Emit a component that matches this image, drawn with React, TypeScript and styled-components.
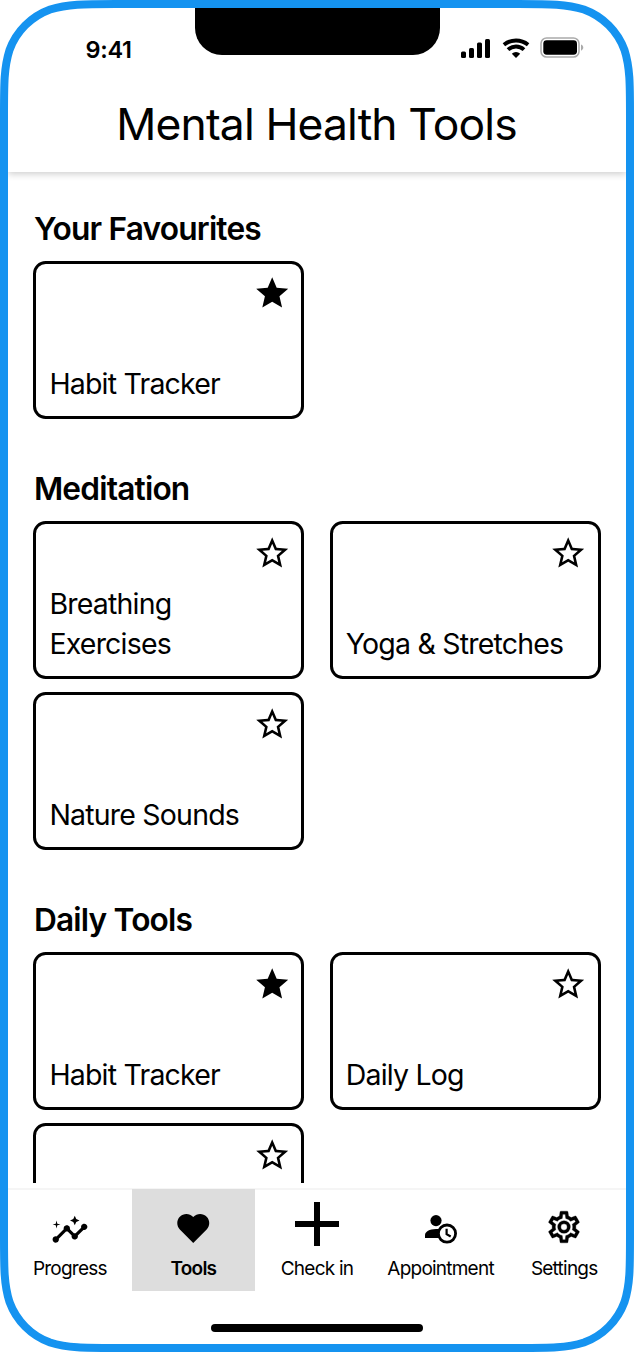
import React from "react";
import styled, { createGlobalStyle, css } from "styled-components";
import { MdInsights, MdStar, MdStarBorder } from "react-icons/md";

const GlobalStyle = createGlobalStyle`
  *, *::before, *::after { box-sizing: border-box; }
  body { margin: 0; background: #fff; color: #000; font-family: Inter, "Liberation Sans", sans-serif; }
`;

const Phone = styled.div`
  position: relative;
  display: flex;
  flex-direction: column;
  width: 634px;
  height: 1352px;
  padding: 8px;
  background: #fff;
  overflow: hidden;
`;

const Bezel = styled.svg`
  position: absolute;
  inset: 0;
  pointer-events: none;
`;

const Header = styled.header`
  flex: none;
  height: 164px;
  box-shadow: 0 2px 7px rgba(0, 0, 0, 0.2);
  clip-path: inset(0 0 -16px 0);
`;

const StatusBar = styled.div`
  display: grid;
  grid-template-columns: 186.5px 245px 1fr;
  height: 76px;
`;

const Time = styled.span`
  padding: 27px 0 0 77.5px;
  font-size: 23.5px;
  line-height: 30px;
  font-weight: 600;
  letter-spacing: -0.3px;
`;

const Notch = styled.div`
  height: 47px;
  background: #000;
  border-radius: 0 0 27px 27px;
`;

const Indicators = styled.div`
  display: flex;
  align-items: flex-start;
  padding: 29px 0 0 21px;
`;

const Title = styled.h1`
  margin: 0;
  padding: 13px 1px 0 0;
  font-size: 44.4px;
  line-height: 54px;
  font-weight: 400;
  letter-spacing: -0.85px;
  text-align: center;
`;

const Content = styled.main`
  flex: none;
  display: flex;
  flex-direction: column;
  gap: 50.7px;
  height: 1011px;
  padding: 38px 25.4px 0;
  overflow: hidden;
`;

const SectionTitle = styled.h2`
  margin: 0 0 13px 0.5px;
  font-size: 31.7px;
  line-height: 38px;
  font-weight: 600;
  letter-spacing: -0.82px;
`;

const CardGrid = styled.div`
  display: grid;
  grid-template-columns: 1fr 1fr;
  gap: 12.7px 25.4px;
`;

const Card = styled.article`
  display: flex;
  flex-direction: column;
  justify-content: space-between;
  height: 158.35px;
  padding: 9.8px 10.1px 12px 13px;
  border: 3px solid #000;
  border-radius: 12.7px;
`;

const StarSlot = styled.span`
  align-self: flex-end;
  height: 38px;
  line-height: 0;
`;

const CardLabel = styled.span`
  font-size: 28.5px;
  line-height: 40px;
  font-weight: 400;
  letter-spacing: -0.8px;
  white-space: pre-line;
`;

const TabBar = styled.nav`
  flex: none;
  display: grid;
  grid-template-columns: repeat(5, 1fr);
  height: 103px;
  margin-top: 5px;
  border-top: 2px solid #f5f5f5;
`;

const Tab = styled.div<{ $active?: boolean }>`
  display: flex;
  flex-direction: column;
  align-items: center;
  height: 102px;
  margin-top: -1px;
  font-size: 19px;
  line-height: 24px;
  letter-spacing: -0.77px;
  ${(p) =>
    p.$active &&
    css`
      background: #ddd;
      font-weight: 600;
    `}
`;

const TabIcon = styled.span<{ $top: number }>`
  height: 68px;
  padding-top: ${(p) => p.$top}px;
  line-height: 0;
`;

const HomeIndicator = styled.div`
  flex: none;
  width: 212px;
  height: 8px;
  margin: 33px auto 0;
  border-radius: 4px;
  background: #000;
`;

const IndicatorGap = styled.span<{ $size: number }>`
  width: ${(p) => p.$size}px;
`;

const SignalIcon = () => (
  <svg width="29" height="21" viewBox="0 0 29 21">
    <rect x="0" y="14.5" width="5" height="6.5" rx="1.5" />
    <rect x="8" y="11" width="5" height="10" rx="1.5" />
    <rect x="16" y="5.5" width="5" height="15.5" rx="1.5" />
    <rect x="24" y="2" width="5" height="19" rx="1.5" />
  </svg>
);

const WifiIcon = () => (
  <svg width="28" height="21" viewBox="0 -1 28 21">
    <g fill="none" stroke="#000" strokeWidth="3.9">
      <path d="M1.9 6.7A19.5 19.5 0 0 1 26.1 6.7" />
      <path d="M6 11.6A12 12 0 0 1 22 11.6" />
    </g>
    <path d="M14 20l-4.2-4.2a6 6 0 0 1 8.4 0z" />
  </svg>
);

const BatteryIcon = () => (
  <svg width="44" height="21" viewBox="0 0 44 21">
    <rect x="1" y="1" width="38" height="19" rx="5.6" fill="none" stroke="#aaa" strokeWidth="1.5" />
    <rect x="3.3" y="3.3" width="33.7" height="14.4" rx="3.4" />
    <path d="M41 7.6c3 1.4 3 4.8 0 6.2z" fill="#aaa" />
  </svg>
);

const HeartIcon = () => (
  <svg width="32.5" height="29" viewBox="0 0 32 29">
    <path d="M16 29L2.6 15.6C-.8 12-.9 6.1 2.6 2.7 6.2-.8 12.2-.9 16 3 19.8-.9 25.8-.8 29.4 2.7 32.9 6.1 32.8 12 29.4 15.6z" />
  </svg>
);

const PlusIcon = () => (
  <svg width="44" height="44" viewBox="0 0 44 44">
    <path d="M22 0v44M0 22h44" stroke="#000" strokeWidth="6" />
  </svg>
);

const AppointmentIcon = () => (
  <svg width="32" height="29" viewBox="0 0 32 29">
    <circle cx="11" cy="5.6" r="5.6" />
    <path d="M11 13.9C4.4 14.2 0 16.4 0 20v3h14V14z" />
    <circle cx="22" cy="18.6" r="8.6" fill="#fff" stroke="#000" strokeWidth="2.8" />
    <path d="M21.6 13.8v5.4l4.1 2.3" fill="none" stroke="#000" strokeWidth="2.2" />
  </svg>
);

const SettingsIcon = () => (
  <svg width="38" height="38" viewBox="0 0 24 24">
    <path
      stroke="#000"
      strokeWidth=".2"
      d="M12 8a4 4 0 0 1 4 4 4 4 0 0 1-4 4 4 4 0 0 1-4-4 4 4 0 0 1 4-4m0 2a2 2 0 0 0-2 2 2 2 0 0 0 2 2 2 2 0 0 0 2-2 2 2 0 0 0-2-2m-2 12c-.25 0-.46-.18-.5-.42l-.37-2.65c-.63-.25-1.17-.59-1.69-.99l-2.49 1.01c-.22.08-.49 0-.61-.22l-2-3.46a.493.493 0 0 1 .12-.64l2.11-1.66L4.5 12l.07-1-2.11-1.63a.493.493 0 0 1-.12-.64l2-3.46c.12-.22.39-.31.61-.22l2.49 1c.52-.39 1.06-.73 1.69-.98l.37-2.65c.04-.24.25-.42.5-.42h4c.25 0 .46.18.5.42l.37 2.65c.63.25 1.17.59 1.69.98l2.49-1c.22-.09.49 0 .61.22l2 3.46c.13.22.07.49-.12.64L19.43 11l.07 1-.07 1 2.11 1.63c.19.15.25.42.12.64l-2 3.46c-.12.22-.39.31-.61.22l-2.49-1c-.52.39-1.06.73-1.69.98l-.37 2.65c-.04.24-.25.42-.5.42h-4m1.25-18l-.37 2.61c-1.2.25-2.26.89-3.03 1.78L5.44 7.35l-.75 1.3L6.8 10.2a5.55 5.55 0 0 0 0 3.6l-2.12 1.56.75 1.3 2.43-1.04c.77.88 1.82 1.52 3.01 1.76l.37 2.62h1.52l.37-2.61c1.19-.25 2.24-.89 3.01-1.77l2.43 1.04.75-1.3-2.12-1.55c.4-1.17.4-2.44 0-3.61l2.11-1.55-.75-1.3-2.41 1.04a5.42 5.42 0 0 0-3.03-1.77L12.75 4h-1.5z"
    />
  </svg>
);

// Rounded rectangle whose corners ease into the straight edges.
function continuousRect(inset: number, w: number, h: number, r: number) {
  const a = 1.5287 * r, b = 1.0885 * r, c = 0.8684 * r, d = 0.6315 * r;
  const e = 0.0749 * r, f = 0.3728 * r, g = 0.1691 * r;
  const L = inset, T = inset, R = w - inset, B = h - inset;
  return [
    `M${L + a} ${T}H${R - a}`,
    `C${R - b} ${T} ${R - c} ${T} ${R - d} ${T + e}`,
    `C${R - f} ${T + g} ${R - g} ${T + f} ${R - e} ${T + d}`,
    `C${R} ${T + c} ${R} ${T + b} ${R} ${T + a}V${B - a}`,
    `C${R} ${B - b} ${R} ${B - c} ${R - e} ${B - d}`,
    `C${R - g} ${B - f} ${R - f} ${B - g} ${R - d} ${B - e}`,
    `C${R - c} ${B} ${R - b} ${B} ${R - a} ${B}H${L + a}`,
    `C${L + b} ${B} ${L + c} ${B} ${L + d} ${B - e}`,
    `C${L + f} ${B - g} ${L + g} ${B - f} ${L + e} ${B - d}`,
    `C${L} ${B - c} ${L} ${B - b} ${L} ${B - a}V${T + a}`,
    `C${L} ${T + b} ${L} ${T + c} ${L + e} ${T + d}`,
    `C${L + g} ${T + f} ${L + f} ${T + g} ${L + d} ${T + e}`,
    `C${L + c} ${T} ${L + b} ${T} ${L + a} ${T}Z`,
  ].join("");
}

interface Tool {
  label: string;
  starred?: boolean;
}

const sections: { title: string; tools: Tool[] }[] = [
  { title: "Your Favourites", tools: [{ label: "Habit Tracker", starred: true }] },
  {
    title: "Meditation",
    tools: [{ label: "Breathing\nExercises" }, { label: "Yoga & Stretches" }, { label: "Nature Sounds" }],
  },
  {
    title: "Daily Tools",
    tools: [{ label: "Habit Tracker", starred: true }, { label: "Daily Log" }, { label: "" }],
  },
];

const tabs = [
  { label: "Progress", icon: <MdInsights size={38} />, top: 22 },
  { label: "Tools", icon: <HeartIcon />, top: 25.3, active: true },
  { label: "Check in", icon: <PlusIcon />, top: 13 },
  { label: "Appointment", icon: <AppointmentIcon />, top: 26 },
  { label: "Settings", icon: <SettingsIcon />, top: 19.4 },
];

export default function App() {
  return (
    <Phone>
      <GlobalStyle />
      <Header>
        <StatusBar>
          <Time>9:41</Time>
          <Notch />
          <Indicators>
            <SignalIcon />
            <IndicatorGap $size={12} />
            <WifiIcon />
            <IndicatorGap $size={10} />
            <BatteryIcon />
          </Indicators>
        </StatusBar>
        <Title>Mental Health Tools</Title>
      </Header>
      <Content>
        {sections.map((section) => (
          <section key={section.title}>
            <SectionTitle>{section.title}</SectionTitle>
            <CardGrid>
              {section.tools.map((tool, i) => (
                <Card key={i}>
                  <StarSlot>{tool.starred ? <MdStar size={38.4} /> : <MdStarBorder size={38.4} />}</StarSlot>
                  <CardLabel>{tool.label}</CardLabel>
                </Card>
              ))}
            </CardGrid>
          </section>
        ))}
      </Content>
      <TabBar>
        {tabs.map((tab) => (
          <Tab key={tab.label} $active={tab.active}>
            <TabIcon $top={tab.top}>{tab.icon}</TabIcon>
            {tab.label}
          </Tab>
        ))}
      </TabBar>
      <HomeIndicator />
      <Bezel width="634" height="1352" viewBox="0 0 634 1352">
        <path d={continuousRect(4, 634, 1352, 73)} fill="none" stroke="#1593f0" strokeWidth="8" />
      </Bezel>
    </Phone>
  );
}
